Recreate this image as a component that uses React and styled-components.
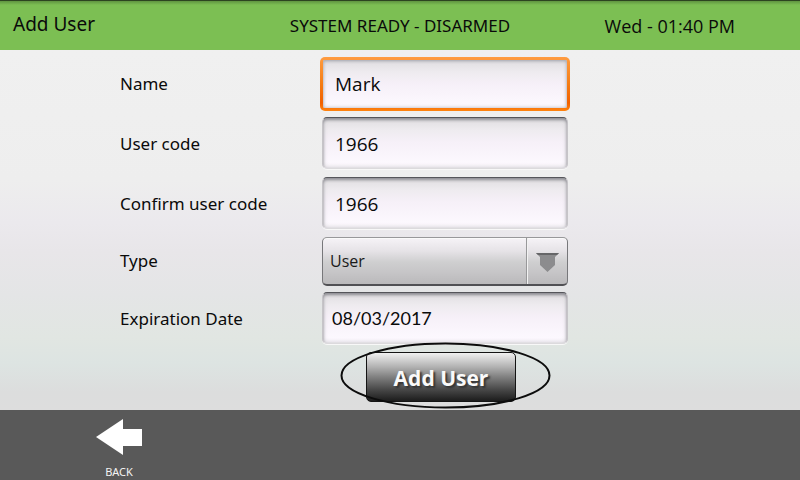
import React from "react";
import styled, { createGlobalStyle, css } from "styled-components";

const GlobalStyle = createGlobalStyle`
  *, *::before, *::after { box-sizing: border-box; }
  body { margin: 0; }
  input, select, button { font-family: inherit; }
`;

const Screen = styled.div`
  display: flex;
  flex-direction: column;
  min-height: 100vh;
  color: #0a0a0a;
  font-family: "Noto Sans", "Open Sans", sans-serif;
`;

const Header = styled.header`
  display: grid;
  grid-template-columns: 1fr auto 1fr;
  align-items: center;
  padding: 0 13px;
  height: 50px;
  border-top: 1px solid #2c4420;
  background: linear-gradient(#5f9440, #7cbf53 4px, #7cbf53);
`;

const Title = styled.h1`
  margin: 0;
  padding-bottom: 4px;
  font-size: 19px;
  line-height: 28px;
  font-weight: 400;
`;

const Status = styled.p`
  margin: 0;
  font-size: 17px;
  line-height: 24px;
`;

const Clock = styled(Status)`
  padding-right: 52px;
  font-family: "Open Sans", sans-serif;
  font-size: 18px;
  text-align: right;
`;

const Form = styled.form`
  flex: 1;
  padding: 7px 29% 8px 15%;
  background: linear-gradient(
    #f0f0f0,
    #eeeeee 36%,
    #ebe9ed 48%,
    #e8e6e9 56%,
    #e4e5e6 68%,
    #e1e6e2 80%,
    #dde4e2 87%,
    #dcdddd 95%,
    #dddddd
  );
`;

const Row = styled.div`
  display: grid;
  grid-template-columns: 202px minmax(0, 1fr);
  align-items: center;
  margin-bottom: ${(p) => (p.$tight ? "6px" : "8px")};
`;

const Label = styled.label`
  padding: ${(p) => (p.$raised ? "0 0 2px" : "2px 0 0")};
  font-size: 17px;
  line-height: 24px;
`;

const wellFill = "linear-gradient(#dfdde0, #eeebef 12px, #f6f0f8 24px, #fcf8fe 44px, #faf6fb)";

const TextField = styled.input`
  display: block;
  width: 100%;
  height: 52px;
  padding: ${(p) => (p.$wide ? "0 9px" : "2px 12px 0")};
  border: 1px solid #c6c4c8;
  border-top: 1px solid #55555a;
  border-bottom-color: #dcdadd;
  border-radius: 5px;
  outline: none;
  background: ${wellFill};
  box-shadow: inset 0 2px 3px #8d8d92, inset 0 0 5px #c9c7cc, 0 1px 0 #f8f8f8;
  color: #0a0a0a;
  font-size: ${(p) => (p.$wide ? "18px" : "19px")};
  font-family: ${(p) => (p.$wide ? '"Lato"' : '"Open Sans"')}, sans-serif;

  ${(p) =>
    p.$active &&
    css`
      width: calc(100% + 4px);
      height: 54px;
      margin: 0 -2px -2px;
      padding-top: 0;
      border: 3px solid transparent;
      background:
        ${wellFill} padding-box,
        linear-gradient(#ff9c40, #f57c14 50%, #f26000 85%, #ff8410) border-box;
      box-shadow: inset 0 1px 3px #a5a8b0, inset 0 0 4px #c9c7cc;
    `}
`;

const SelectBox = styled.div`
  display: grid;
  grid-template-columns: minmax(0, 1fr) 41px;
  height: 49px;
  border: 1px solid #77777a;
  border-top-color: #98989a;
  border-bottom: 2px solid #505054;
  border-radius: 5px;
  background: linear-gradient(#f6f3f7, #e6e3e7 28%, #cfcfd0 52%, #c6c5c7 75%, #bab9bb);
  box-shadow: inset 0 1px 0 #fafafa;

  > * { grid-row: 1; }
`;

const Select = styled.select`
  grid-column: 1 / -1;
  appearance: none;
  width: 100%;
  padding: 0 48px 0 7px;
  border: 0;
  outline: none;
  background: transparent;
  color: #1a1a1a;
  font-family: "Open Sans", sans-serif;
  font-size: 16px;
`;

const SelectArrow = styled.span`
  grid-column: 2;
  display: flex;
  align-items: center;
  justify-content: center;
  padding-top: 2px;
  border-left: 1px solid #98989a;
  box-shadow: inset 1px 0 0 #f2f2f2;
  pointer-events: none;
`;

const Actions = styled.div`
  display: flex;
  padding-left: 246px;
`;

const Callout = styled.div`
  position: relative;
  width: 150px;
`;

const SubmitButton = styled.button`
  display: block;
  width: 100%;
  height: 50px;
  padding: 2px 0 0;
  border: 1px solid #141414;
  border-radius: 5px;
  background: linear-gradient(#f0f0f0, #b4b4b4 28%, #808080 50%, #4a4a4a 75%, #1c1c1c);
  color: #fafafa;
  font-family: "Open Sans", sans-serif;
  font-size: 21px;
  font-weight: 700;
  text-shadow: 2px 2px 2px #333333;
`;

const CalloutRing = styled.svg`
  position: absolute;
  top: -10px;
  left: -27px;
  pointer-events: none;
`;

const Footer = styled.footer`
  display: flex;
  height: 70px;
  padding: 8px 0 0 95px;
  background: #595959;
`;

const BackButton = styled.button`
  display: flex;
  flex-direction: column;
  align-items: center;
  gap: 8px;
  padding: 0;
  border: 0;
  background: none;
  color: #f4f4f4;
  font-size: 11px;
  line-height: 16px;
`;

export default function App() {
  return (
    <Screen>
      <GlobalStyle />
      <Header>
        <Title>Add User</Title>
        <Status>SYSTEM READY - DISARMED</Status>
        <Clock>Wed - 01:40 PM</Clock>
      </Header>
      <Form onSubmit={(e) => e.preventDefault()}>
        <Row>
          <Label htmlFor="name">Name</Label>
          <TextField id="name" defaultValue="Mark" $active />
        </Row>
        <Row>
          <Label htmlFor="code">User code</Label>
          <TextField id="code" defaultValue="1966" />
        </Row>
        <Row>
          <Label htmlFor="confirm">Confirm user code</Label>
          <TextField id="confirm" defaultValue="1966" />
        </Row>
        <Row $tight>
          <Label htmlFor="type" $raised>Type</Label>
          <SelectBox>
            <Select id="type" defaultValue="User">
              <option>User</option>
            </Select>
            <SelectArrow>
              <svg width="23" height="19" viewBox="0 0 23 19" aria-hidden="true">
                <path d="M0 0H23L19 4V12L11.5 19L4 12V4Z" fill="#8c8c8e" />
                <path d="M0 0H23L21 2H2Z" fill="#666668" />
              </svg>
            </SelectArrow>
          </SelectBox>
        </Row>
        <Row>
          <Label htmlFor="expires">Expiration Date</Label>
          <TextField id="expires" defaultValue="08/03/2017" $wide />
        </Row>
        <Actions>
          <Callout>
            <SubmitButton type="submit">Add User</SubmitButton>
            <CalloutRing width="212" height="68" viewBox="0 0 212 68" aria-hidden="true">
              <ellipse cx="106.5" cy="33.5" rx="104" ry="32" fill="none" stroke="#0c0c0c" strokeWidth="2" />
            </CalloutRing>
          </Callout>
        </Actions>
      </Form>
      <Footer>
        <BackButton type="button">
          <svg width="48" height="38" viewBox="0 0 48 38" aria-hidden="true">
            <path d="M1 19L28 1V11H47V28H28V37Z" fill="#ffffff" />
          </svg>
          BACK
        </BackButton>
      </Footer>
    </Screen>
  );
}
